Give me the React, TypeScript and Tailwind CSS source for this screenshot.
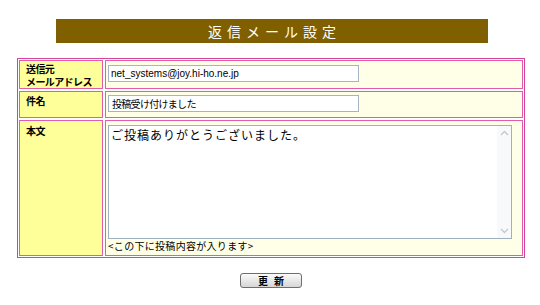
import { useState } from 'react'

const jp = "font-['Noto_Sans_CJK_JP',sans-serif]"

function Chevron({ up }: { up?: boolean }) {
  return (
    <svg width="9" height="6" viewBox="0 0 9 6" className="block">
      <path
        d={up ? 'M1 5 L4.5 1.5 L8 5' : 'M1 1 L4.5 4.5 L8 1'}
        fill="none"
        stroke="#c4c8cc"
        strokeWidth="1.3"
      />
    </svg>
  )
}

export default function App() {
  const [email, setEmail] = useState('net_systems@joy.hi-ho.ne.jp')
  const [subject, setSubject] = useState('投稿受け付けました')
  const [body, setBody] = useState('ご投稿ありがとうございました。')

  return (
    <div className="w-[540px] h-[305px] bg-white pt-[19px]">
      {/* Title */}
      <div className="ml-[56px] w-[432px] h-[24px] bg-[#7f5f00] flex items-center justify-center">
        <span className={`${jp} text-white text-[14px] leading-none tracking-[5px] pl-[5px]`}>
          返信メール設定
        </span>
      </div>

      {/* Form table */}
      <div className="ml-[17px] mt-[15px] w-[508px] border border-[#d4449c] p-px">
        <div className="grid grid-cols-[84px_1fr] grid-rows-[29px_27px_136px] gap-[2px]">
          {/* Row 1 */}
          <div className="bg-[#ffff99] border border-[#e25cae] pl-[6px] pt-[1px]">
            <div className={`${jp} font-bold text-[10px] leading-[13px] tracking-[-0.6px] text-black`}>
              <div>送信元</div>
              <div>メールアドレス</div>
            </div>
          </div>
          <div className="bg-[#ffffe8] border border-[#e25cae] pl-[2px] pt-[4px]">
            <input
              value={email}
              onChange={(e) => setEmail(e.target.value)}
              className="block w-[251px] h-[17px] border border-[#a6b5c2] bg-white px-[2px] text-[10px] text-black font-['Liberation_Sans',sans-serif] outline-none"
            />
          </div>

          {/* Row 2 */}
          <div className="bg-[#ffff99] border border-[#e25cae] pl-[6px] pt-[3px]">
            <div className={`${jp} font-bold text-[10px] leading-[12px] tracking-[-0.6px] text-black`}>件名</div>
          </div>
          <div className="bg-[#ffffe8] border border-[#e25cae] pl-[2px] pt-[3px]">
            <input
              value={subject}
              onChange={(e) => setSubject(e.target.value)}
              className={`${jp} block w-[251px] h-[17px] border border-[#a6b5c2] bg-white px-[3px] text-[10px] tracking-[-0.7px] text-black outline-none`}
            />
          </div>

          {/* Row 3 */}
          <div className="bg-[#ffff99] border border-[#e25cae] pl-[6px] pt-[4px]">
            <div className={`${jp} font-bold text-[10px] leading-[12px] tracking-[-0.6px] text-black`}>本文</div>
          </div>
          <div className="bg-[#ffffe8] border border-[#e25cae] pl-[2px] pt-[4px]">
            <div className="flex w-[404px] h-[114px] border border-[#9fb0bf] bg-white">
              <textarea
                value={body}
                onChange={(e) => setBody(e.target.value)}
                className={`${jp} flex-1 resize-none overflow-hidden bg-white px-[2px] pt-[2px] text-[12px] leading-[14px] tracking-[1px] text-black outline-none`}
              />
              <div className="w-[14px] bg-[#f7f9fa] flex flex-col items-center justify-between py-[4px]">
                <Chevron up />
                <Chevron />
              </div>
            </div>
            <div className={`${jp} mt-[1px] text-[10px] leading-[12px] tracking-[0.3px] text-black`}>
              &lt;この下に投稿内容が入ります&gt;
            </div>
          </div>
        </div>
      </div>

      {/* Submit */}
      <div className="ml-[17px] w-[508px] mt-[15px] flex justify-center">
        <button
          type="button"
          className={`${jp} w-[62px] h-[15px] rounded-[3px] border border-[#6e6e6e] bg-gradient-to-b from-[#fbfbfb] to-[#d6d6d6] text-[10px] leading-none font-bold text-black tracking-[6px] pl-[6px]`}
        >
          更新
        </button>
      </div>
    </div>
  )
}
